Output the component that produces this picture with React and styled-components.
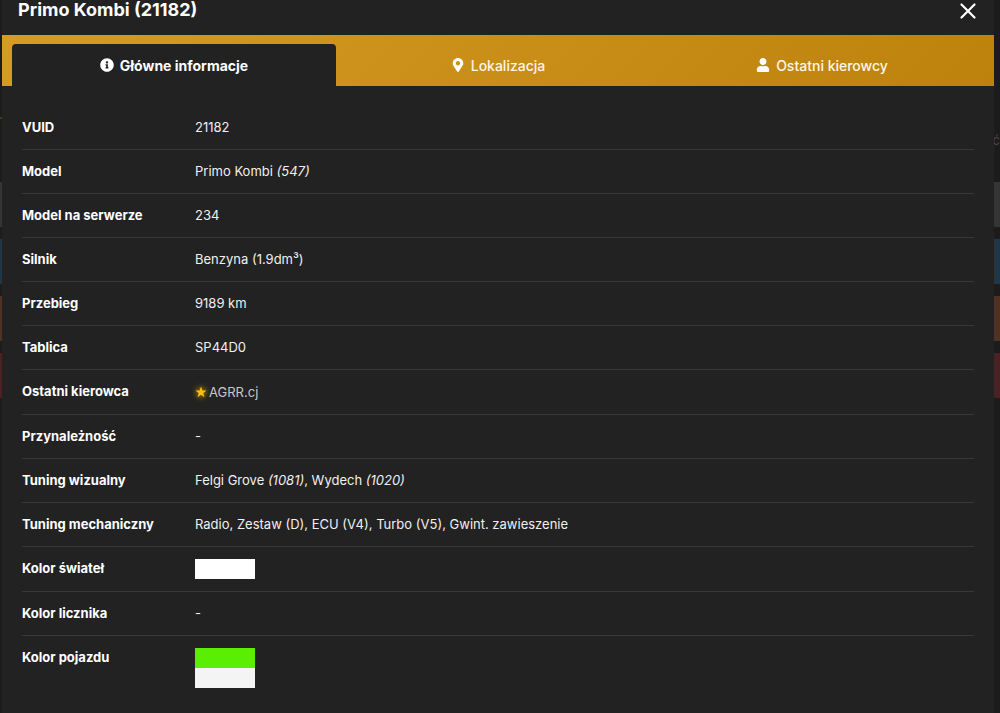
import React, { useState } from 'react';
import styled, { createGlobalStyle } from 'styled-components';
import { FaInfoCircle, FaMapMarkerAlt, FaUser } from 'react-icons/fa';

const GlobalStyle = createGlobalStyle`
  * {
    box-sizing: border-box;
  }
  body {
    margin: 0;
    background: #1c1c1c;
    color: #f0f0f0;
    font-family: Inter, 'Noto Sans', sans-serif;
    font-size: 13px;
    line-height: 19px;
  }
`;

const Page = styled.div`
  position: relative;
  overflow: hidden;
`;

const Backdrop = styled.div`
  position: absolute;
  inset: 0;
  display: flex;
  flex-direction: column;
  gap: 12px;
  padding-top: 117px;
`;

const BackdropHeading = styled.div`
  height: 53px;
  padding-top: 14px;
  background: linear-gradient(#4a3914, #4a3914) no-repeat 0 0 / 50% 2px;
  color: #4a4a4a;
  text-align: right;
`;

const BackdropBar = styled.div`
  height: 45px;
  background: ${props => props.$color};
`;

const Modal = styled.section`
  position: relative;
  min-height: 100vh;
  margin: 0 6px 0 2px;
  background: #222;
`;

const Header = styled.header`
  display: flex;
  justify-content: space-between;
  padding: 0 18px 16px 16px;
`;

const Title = styled.h1`
  margin: 0;
  color: #fff;
  font-size: 18px;
  font-weight: 700;
  line-height: 19px;
`;

const CloseButton = styled.button`
  display: flex;
  align-items: flex-end;
  height: 19px;
  padding: 0;
  border: 0;
  background: none;
  color: #fff;
  cursor: pointer;
`;

const Tabs = styled.div`
  display: flex;
  padding: 9px 10px 0;
  background: linear-gradient(135deg, #d69b24, #bd820c);
`;

const Tab = styled.button`
  display: flex;
  flex: 1;
  align-items: center;
  justify-content: center;
  gap: 6px;
  height: 42px;
  padding: 0;
  border: 0;
  border-radius: 4px 4px 0 0;
  background: ${props => (props.$active ? '#222' : 'transparent')};
  color: ${props => (props.$active ? '#fff' : '#fdf6e6')};
  font-family: inherit;
  font-size: 14px;
  font-weight: ${props => (props.$active ? 700 : 500)};
  cursor: pointer;

  svg {
    color: #fff;
  }
`;

const Content = styled.div`
  padding: 20px;
`;

const Table = styled.table`
  width: 100%;
  border-collapse: separate;
  border-spacing: 0;
`;

const Row = styled.tr`
  th,
  td {
    padding: 12px 0;
    border-bottom: 1px solid #383838;
    text-align: left;
    vertical-align: top;
  }
  &:last-child th,
  &:last-child td {
    border-bottom: 0;
  }
`;

const Label = styled.th`
  width: 173px;
  color: #fff;
  font-weight: 700;
`;

const Value = styled.td`
  font-weight: 400;
`;

const Driver = styled.a`
  display: flex;
  align-items: center;
  gap: 2px;
  height: 20px;
  color: #c8c8c8;
  text-decoration: none;

  svg {
    color: #ffc107;
    filter: drop-shadow(0 0 3px #ffc107);
  }
`;

const Swatch = styled.div`
  width: 60px;
  height: 20px;
  background: ${props => props.$color};
`;

const tabs = [
  { id: 'info', label: 'Główne informacje', icon: <FaInfoCircle size={14} /> },
  { id: 'location', label: 'Lokalizacja', icon: <FaMapMarkerAlt size={14} /> },
  { id: 'drivers', label: 'Ostatni kierowcy', icon: <FaUser size={14} /> },
];

const Star = () => (
  <svg width="12" height="12" viewBox="0 0 12 12" fill="currentColor">
    <path d="M6 .4l1.4 4h4.2L8.3 7l1.2 4.2L6 8.7l-3.5 2.5L3.7 7 .4 4.4h4.2z" />
  </svg>
);

const rows = [
  { label: 'VUID', value: '21182' },
  { label: 'Model', value: <>Primo Kombi <i>(547)</i></> },
  { label: 'Model na serwerze', value: '234' },
  { label: 'Silnik', value: 'Benzyna (1.9dm³)' },
  { label: 'Przebieg', value: '9189 km' },
  { label: 'Tablica', value: 'SP44D0' },
  { label: 'Ostatni kierowca', value: <Driver href="#driver"><Star />AGRR.cj</Driver> },
  { label: 'Przynależność', value: '-' },
  { label: 'Tuning wizualny', value: <>Felgi Grove <i>(1081)</i>, Wydech <i>(1020)</i></> },
  { label: 'Tuning mechaniczny', value: 'Radio, Zestaw (D), ECU (V4), Turbo (V5), Gwint. zawieszenie' },
  { label: 'Kolor świateł', value: <Swatch $color="#fff" /> },
  { label: 'Kolor licznika', value: '-' },
  { label: 'Kolor pojazdu', value: <><Swatch $color="#5aee05" /><Swatch $color="#f4f4f4" /></> },
];

const App = () => {
  const [active, setActive] = useState('info');

  return (
    <Page>
      <GlobalStyle />
      <Backdrop aria-hidden="true">
        <BackdropHeading>ć</BackdropHeading>
        <BackdropBar $color="#353535" />
        <BackdropBar $color="#223746" />
        <BackdropBar $color="#513222" />
        <BackdropBar $color="#4a2224" />
      </Backdrop>

      <Modal role="dialog" aria-labelledby="vehicle-title">
        <Header>
          <Title id="vehicle-title">Primo Kombi (21182)</Title>
          <CloseButton aria-label="Zamknij">
            <svg width="16" height="16" viewBox="0 0 16 16" fill="none" stroke="currentColor" strokeWidth="2.2" strokeLinecap="round">
              <path d="M1.5 1.5l13 13M14.5 1.5l-13 13" />
            </svg>
          </CloseButton>
        </Header>

        <Tabs role="tablist">
          {tabs.map(tab => (
            <Tab
              key={tab.id}
              role="tab"
              aria-selected={active === tab.id}
              $active={active === tab.id}
              onClick={() => setActive(tab.id)}
            >
              {tab.icon}
              {tab.label}
            </Tab>
          ))}
        </Tabs>

        <Content>
          <Table>
            <tbody>
              {rows.map(row => (
                <Row key={row.label}>
                  <Label scope="row">{row.label}</Label>
                  <Value>{row.value}</Value>
                </Row>
              ))}
            </tbody>
          </Table>
        </Content>
      </Modal>
    </Page>
  );
};

export default App;
